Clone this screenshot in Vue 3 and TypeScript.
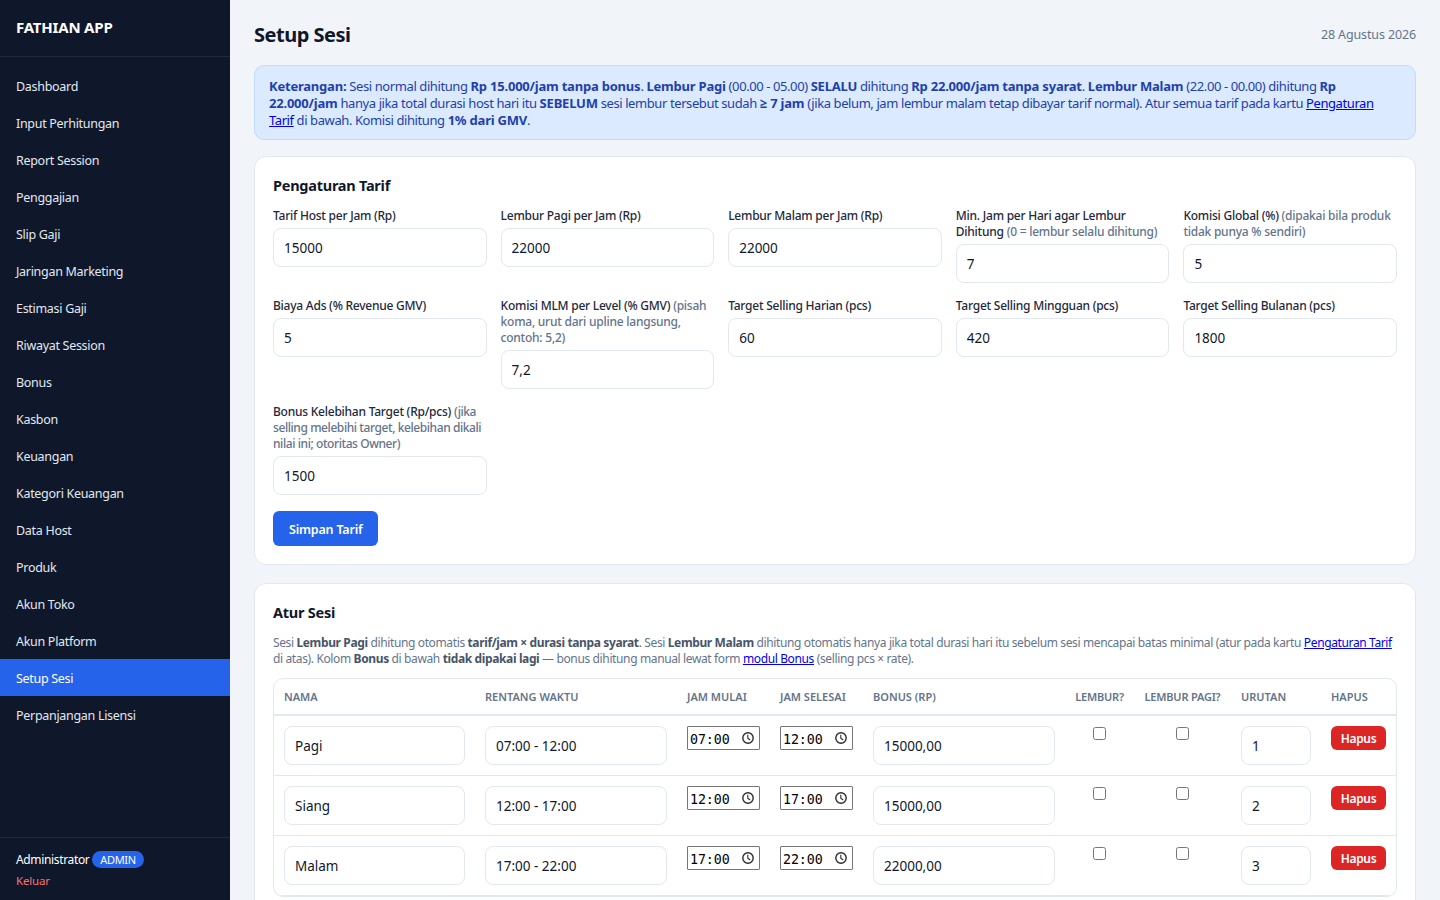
<script setup lang="ts">
const navItems = [
  'Dashboard', 'Input Perhitungan', 'Report Session', 'Penggajian', 'Slip Gaji',
  'Jaringan Marketing', 'Estimasi Gaji', 'Riwayat Session', 'Bonus', 'Kasbon',
  'Keuangan', 'Kategori Keuangan', 'Data Host', 'Produk', 'Akun Toko',
  'Akun Platform', 'Setup Sesi', 'Perpanjangan Lisensi',
]

const sessions = [
  { nama: 'Pagi', rentang: '07:00 - 12:00', mulai: '07:00', selesai: '12:00', bonus: '15000,00', urutan: 1 },
  { nama: 'Siang', rentang: '12:00 - 17:00', mulai: '12:00', selesai: '17:00', bonus: '15000,00', urutan: 2 },
  { nama: 'Malam', rentang: '17:00 - 22:00', mulai: '17:00', selesai: '22:00', bonus: '22000,00', urutan: 3 },
]
</script>

<template>
  <div class="layout">
    <aside class="sidebar">
      <div class="brand">FATHIAN APP</div>
      <nav class="nav">
        <a v-for="item in navItems" :key="item" class="nav__item" :class="{ 'nav__item--active': item === 'Setup Sesi' }">{{ item }}</a>
      </nav>
      <div class="user">
        <div class="user__row">Administrator <span class="badge">ADMIN</span></div>
        <a class="logout">Keluar</a>
      </div>
    </aside>

    <main class="main">
      <header class="header">
        <h1>Setup Sesi</h1>
        <span class="date">28 Agustus 2026</span>
      </header>

      <div class="alert">
        <b>Keterangan:</b> Sesi normal dihitung <b>Rp 15.000/jam tanpa bonus</b>. <b>Lembur Pagi</b> (00.00 - 05.00) <b>SELALU</b> dihitung <b>Rp 22.000/jam tanpa syarat</b>. <b>Lembur Malam</b> (22.00 - 00.00) dihitung <b>Rp 22.000/jam</b> hanya jika total durasi host hari itu <b>SEBELUM</b> sesi lembur tersebut sudah <b>≥ 7 jam</b> (jika belum, jam lembur malam tetap dibayar tarif normal). Atur semua tarif pada kartu <a href="#">Pengaturan Tarif</a> di bawah. Komisi dihitung <b>1% dari GMV</b>.
      </div>

      <section class="card">
        <h2>Pengaturan Tarif</h2>
        <div class="form-grid">
          <label class="field"><span>Tarif Host per Jam (Rp)</span><input value="15000"></label>
          <label class="field"><span>Lembur Pagi per Jam (Rp)</span><input value="22000"></label>
          <label class="field"><span>Lembur Malam per Jam (Rp)</span><input value="22000"></label>
          <label class="field"><span>Min. Jam per Hari agar Lembur Dihitung <small>(0 = lembur selalu dihitung)</small></span><input value="7"></label>
          <label class="field"><span>Komisi Global (%) <small>(dipakai bila produk tidak punya % sendiri)</small></span><input value="5"></label>
          <label class="field"><span>Biaya Ads (% Revenue GMV)</span><input value="5"></label>
          <label class="field"><span>Komisi MLM per Level (% GMV) <small>(pisah koma, urut dari upline langsung, contoh: 5,2)</small></span><input value="7,2"></label>
          <label class="field"><span>Target Selling Harian (pcs)</span><input value="60"></label>
          <label class="field"><span>Target Selling Mingguan (pcs)</span><input value="420"></label>
          <label class="field"><span>Target Selling Bulanan (pcs)</span><input value="1800"></label>
          <label class="field"><span>Bonus Kelebihan Target (Rp/pcs) <small class="tight">(jika selling melebihi target, kelebihan dikali nilai ini; otoritas Owner)</small></span><input value="1500"></label>
        </div>
        <button class="btn-primary">Simpan Tarif</button>
      </section>

      <section class="card">
        <h2>Atur Sesi</h2>
        <p class="note">Sesi <b>Lembur Pagi</b> dihitung otomatis <b>tarif/jam × durasi tanpa syarat</b>. Sesi <b>Lembur Malam</b> dihitung otomatis hanya jika total durasi hari itu sebelum sesi mencapai batas minimal (atur pada kartu <a href="#">Pengaturan Tarif</a> di atas). Kolom <b>Bonus</b> di bawah <b>tidak dipakai lagi</b> — bonus dihitung manual lewat form <a href="#">modul Bonus</a> (selling pcs × rate).</p>
        <div class="table-wrap">
          <table>
            <colgroup>
              <col class="c-nama"><col class="c-wide"><col class="c-time"><col class="c-time"><col class="c-wide">
              <col class="c-lembur"><col class="c-pagi"><col class="c-urut"><col class="c-hapus">
            </colgroup>
            <thead>
              <tr>
                <th>Nama</th><th>Rentang Waktu</th><th>Jam Mulai</th><th>Jam Selesai</th><th>Bonus (Rp)</th>
                <th class="center">Lembur?</th><th class="center">Lembur Pagi?</th><th>Urutan</th><th>Hapus</th>
              </tr>
            </thead>
            <tbody>
              <tr v-for="s in sessions" :key="s.nama">
                <td><input :value="s.nama"></td>
                <td><input :value="s.rentang"></td>
                <td v-for="t in [s.mulai, s.selesai]" :key="t">
                  <div class="time">
                    <span>{{ t }}</span>
                    <svg width="12" height="12" viewBox="0 0 12 12" fill="none" stroke="#2b2b2b" stroke-width="1.4">
                      <circle cx="6" cy="6" r="5.2" />
                      <path d="M5.8 2.8v3.5l2.4 1.7" stroke-width="1.1" />
                    </svg>
                  </div>
                </td>
                <td><input :value="s.bonus"></td>
                <td><input class="check" type="checkbox"></td>
                <td><input class="check" type="checkbox"></td>
                <td><input :value="s.urutan"></td>
                <td><button class="btn-danger">Hapus</button></td>
              </tr>
            </tbody>
          </table>
        </div>
      </section>
    </main>
  </div>
</template>

<style>
html, body { margin: 0; overflow: hidden; }
</style>

<style scoped>
.layout {
  display: flex;
  height: 100vh;
  background: #f1f5f9;
  color: #0f172a;
  font-family: "Noto Sans", "Open Sans", sans-serif;
  font-size: 13px;
  overflow: hidden;
}

.sidebar {
  width: 230px;
  flex-shrink: 0;
  display: flex;
  flex-direction: column;
  background: #0f172a;
  color: #e2e8f0;
}

.brand {
  height: 57px;
  box-sizing: border-box;
  padding: 17px 16px 0;
  font-size: 15px;
  font-weight: 700;
  letter-spacing: -0.2px;
  line-height: 20px;
  color: #fff;
  border-bottom: 1px solid #1e293b;
}

.nav {
  flex: 1;
  padding-top: 10px;
}

.nav__item {
  display: block;
  height: 37px;
  line-height: 39px;
  padding: 0 16px;
  font-size: 12.5px;
  letter-spacing: -0.3px;
}

.nav__item--active {
  background: #2563eb;
  color: #fff;
}

.user {
  padding: 12px 16px 10px;
  border-top: 1px solid #1e293b;
  font-size: 12px;
  letter-spacing: -0.35px;
  color: #fff;
}

.user__row {
  line-height: 20px;
}

.badge {
  display: inline-block;
  padding: 0 8px;
  border-radius: 999px;
  background: #2563eb;
  font-size: 11px;
  letter-spacing: -0.3px;
  line-height: 17px;
}

.logout {
  display: block;
  margin-top: 2px;
  color: #f87171;
  font-size: 11.5px;
  letter-spacing: -0.2px;
  line-height: 18px;
}

.main {
  flex: 1;
  min-width: 0;
  padding: 24px;
  overflow: hidden;
}

.header {
  display: flex;
  justify-content: space-between;
  align-items: flex-start;
  height: 23px;
  margin-bottom: 18px;
}

.header h1 {
  margin: 0;
  font-size: 20px;
  letter-spacing: -0.5px;
  line-height: 21px;
  font-weight: 700;
}

.date {
  font-size: 12.5px;
  letter-spacing: -0.13px;
  line-height: 21px;
  color: #64748b;
}

.alert {
  padding: 12px 14px 10px;
  margin-bottom: 16px;
  border: 1px solid #bfdbfe;
  border-radius: 10px;
  background: #dbeafe;
  color: #1e40af;
  font-size: 13px;
  letter-spacing: -0.41px;
  line-height: 17px;
}

.alert b {
  letter-spacing: -0.21px;
}

.card {
  margin-bottom: 18px;
  padding: 18px;
  border: 1px solid #e2e8f0;
  border-radius: 12px;
  background: #fff;
}

.card h2 {
  margin: 0 0 13px;
  font-size: 14.5px;
  letter-spacing: -0.25px;
  line-height: 20px;
  font-weight: 700;
}

.form-grid {
  display: grid;
  grid-template-columns: repeat(5, 1fr);
  gap: 15px 14px;
  align-items: start;
}

.field {
  display: block;
}

.field span {
  display: block;
  margin-bottom: 4px;
  font-size: 12px;
  font-weight: 500;
  letter-spacing: -0.24px;
  line-height: 16px;
  color: #1e293b;
}

.field small {
  font-size: 12px;
  color: #64748b;
}

.field small.tight {
  letter-spacing: -0.42px;
}

input:not(.check) {
  display: block;
  width: 100%;
  height: 39px;
  box-sizing: border-box;
  padding: 0 10px;
  border: 1px solid #e2e8f0;
  border-radius: 8px;
  background: #fff;
  color: #0f172a;
  font-family: inherit;
  font-size: 13.5px;
}

.btn-primary {
  display: block;
  margin-top: 16px;
  height: 35px;
  padding: 1px 16px 0;
  border: none;
  border-radius: 6px;
  background: #2563eb;
  color: #fff;
  font-family: inherit;
  font-size: 12.5px;
  letter-spacing: -0.2px;
  font-weight: 600;
}

.note {
  margin: 1px 0 11px;
  font-size: 12px;
  letter-spacing: -0.37px;
  line-height: 16px;
  color: #64748b;
}

.note b {
  color: #475569;
}

.table-wrap {
  border: 1px solid #e2e8f0;
  border-radius: 10px;
  overflow: hidden;
}

table {
  width: 100%;
  table-layout: fixed;
  border-collapse: collapse;
}

.c-nama { width: 201px; }
.c-wide { width: 202px; }
.c-time { width: 93px; }
.c-lembur { width: 69px; }
.c-pagi { width: 97px; }
.c-urut { width: 90px; }
.c-hapus { width: 75px; }

th {
  height: 35px;
  padding: 0 10px;
  border-bottom: 2px solid #e2e8f0;
  text-align: left;
  font-size: 11px;
  font-weight: 600;
  text-transform: uppercase;
  white-space: nowrap;
  color: #64748b;
}

td {
  padding: 10px;
  vertical-align: top;
  border-bottom: 1px solid #e2e8f0;
}

th.center {
  text-align: center;
  letter-spacing: -0.2px;
}

.check {
  display: block;
  width: 13px;
  height: 13px;
  margin: 1px auto 0;
}

.time {
  display: flex;
  align-items: center;
  justify-content: space-between;
  width: 73px;
  height: 24px;
  box-sizing: border-box;
  padding: 0 5px 0 2px;
  border: 1px solid #767676;
  border-radius: 1px;
  font-family: "DejaVu Sans Mono", monospace;
  font-size: 13.33px;
  letter-spacing: -0.1px;
  color: #000;
}

.time span {
  padding-top: 2px;
}

.btn-danger {
  display: block;
  width: 55px;
  height: 24px;
  padding: 0;
  border: none;
  border-radius: 6px;
  background: #dc2626;
  color: #fff;
  font-family: inherit;
  font-size: 12px;
  letter-spacing: -0.3px;
  font-weight: 600;
}
</style>
